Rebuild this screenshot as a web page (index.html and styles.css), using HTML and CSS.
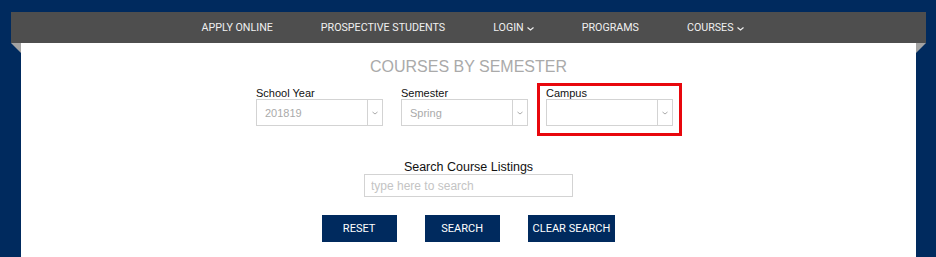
FILE: index.html
```html
<!DOCTYPE html>
<html lang="en">
<head>
  <meta charset="UTF-8">
  <title>Courses by Semester</title>
  <link rel="stylesheet" href="styles.css">
</head>
<body>
  <div class="page">
    <nav class="topnav">
      <a href="#">APPLY ONLINE</a>
      <a href="#">PROSPECTIVE STUDENTS</a>
      <a href="#">LOGIN <svg class="chev" width="7" height="4" viewBox="0 0 7 4"><path d="M0.5 0.5 L3.5 3 L6.5 0.5" fill="none" stroke="#eee" stroke-width="1.2"/></svg></a>
      <a href="#">PROGRAMS</a>
      <a href="#">COURSES <svg class="chev" width="7" height="4" viewBox="0 0 7 4"><path d="M0.5 0.5 L3.5 3 L6.5 0.5" fill="none" stroke="#eee" stroke-width="1.2"/></svg></a>
    </nav>

    <main class="content">
      <h1 class="title">COURSES BY SEMESTER</h1>

      <div class="filters">
        <div class="field">
          <label>School Year</label>
          <div class="select">
            <span class="value">201819</span>
            <span class="arrow"><svg width="6" height="4" viewBox="0 0 6 4"><path d="M0.5 1 L3 3 L5.5 1" fill="none" stroke="#aaa" stroke-width="1"/></svg></span>
          </div>
        </div>
        <div class="field">
          <label>Semester</label>
          <div class="select">
            <span class="value">Spring</span>
            <span class="arrow"><svg width="6" height="4" viewBox="0 0 6 4"><path d="M0.5 1 L3 3 L5.5 1" fill="none" stroke="#aaa" stroke-width="1"/></svg></span>
          </div>
        </div>
        <div class="field highlight">
          <label>Campus</label>
          <div class="select">
            <span class="value"></span>
            <span class="arrow"><svg width="6" height="4" viewBox="0 0 6 4"><path d="M0.5 1 L3 3 L5.5 1" fill="none" stroke="#aaa" stroke-width="1"/></svg></span>
          </div>
        </div>
      </div>

      <div class="search">
        <label for="searchInput">Search Course Listings</label>
        <input id="searchInput" type="text" placeholder="type here to search">
      </div>

      <div class="actions">
        <button>RESET</button>
        <button>SEARCH</button>
        <button>CLEAR SEARCH</button>
      </div>
    </main>
  </div>
</body>
</html>
```

FILE: styles.css
```css
* {
  margin: 0;
  padding: 0;
  box-sizing: border-box;
}

body {
  background: #002a5e;
  font-family: 'Liberation Sans', Arial, sans-serif;
  min-height: 100vh;
}

.page {
  padding: 12px 10px 0 11px;
  min-height: 100vh;
  display: flex;
  flex-direction: column;
}

.topnav {
  height: 31px;
  background: #4e4e4e;
  display: flex;
  justify-content: center;
  align-items: center;
  gap: 48px;
  padding-left: 8px;
}

.topnav a {
  font-family: Roboto, sans-serif;
  font-size: 10.7px;
  color: #f0f0f0;
  text-decoration: none;
  display: flex;
  align-items: center;
}

.topnav .chev {
  margin-left: 3px;
  margin-top: 2px;
}

.content {
  flex: 1;
  position: relative;
  background: #fff;
  margin: 0 10px;
  padding-top: 14px;
}

/* folded ribbon corners under the nav bar */
.content::before,
.content::after {
  content: '';
  position: absolute;
  top: 0;
  width: 0;
  height: 0;
  border-top: 10px solid #a3a3a3;
}

.content::before {
  left: -10px;
  border-left: 10px solid transparent;
}

.content::after {
  right: -10px;
  border-right: 10px solid transparent;
}

.title {
  font-size: 16px;
  font-weight: normal;
  line-height: 20px;
  color: #aaa;
  text-align: center;
}

.filters {
  display: flex;
  justify-content: center;
  gap: 18px;
  margin-top: 9px;
  padding-right: 8px;
}

.field {
  width: 127px;
  position: relative;
}

.field label {
  display: block;
  font-size: 11px;
  line-height: 14px;
  margin-bottom: -1px;
  color: #111;
}

.highlight::after {
  content: '';
  position: absolute;
  top: -3px;
  left: -9px;
  right: -9px;
  bottom: -10px;
  border: 3px solid #e8070d;
}

.select {
  display: flex;
  height: 27px;
  border: 1px solid #d3d3d3;
}

.select .value {
  flex: 1;
  padding-left: 8px;
  font-size: 11px;
  line-height: 27px;
  color: #aaa;
}

.select .arrow {
  width: 15px;
  border-left: 1px solid #d3d3d3;
  display: flex;
  align-items: center;
  justify-content: center;
}

.search {
  display: flex;
  flex-direction: column;
  align-items: center;
  margin-top: 33px;
}

.search label {
  font-size: 12.5px;
  line-height: 16px;
  color: #111;
}

.search input {
  width: 209px;
  height: 23px;
  margin-top: -1px;
  border: 1px solid #d3d3d3;
  padding: 0 6px;
  font-family: 'Liberation Sans', Arial, sans-serif;
  font-size: 12px;
  color: #333;
  outline: none;
}

.search input::placeholder {
  color: #c4c4c4;
}

.actions {
  display: flex;
  justify-content: center;
  gap: 28px;
  margin-top: 18px;
}

.actions button {
  min-width: 75px;
  height: 27px;
  padding: 0 5px;
  border: none;
  background: #002a5e;
  color: #fff;
  font-family: Roboto, sans-serif;
  font-size: 11px;
  cursor: pointer;
}
```
